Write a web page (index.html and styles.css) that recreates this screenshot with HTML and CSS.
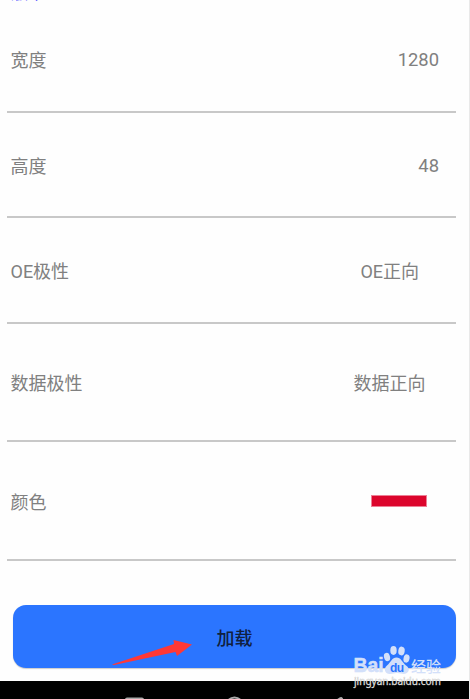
FILE: index.html
```html
<!DOCTYPE html>
<html lang="zh-CN">
<head>
<meta charset="utf-8">
<title>屏幕参数</title>
<link rel="stylesheet" href="styles.css">
</head>
<body>
<main class="screen">
  <div class="section-title">版本</div>
  <section class="rows">
    <div class="row"><span>宽度</span><span class="value value-number">1280</span></div>
    <div class="row"><span>高度</span><span class="value value-number">48</span></div>
    <div class="row"><span>OE极性</span><span class="value value-oe">OE正向</span></div>
    <div class="row row-tall"><span>数据极性</span><span class="value value-data">数据正向</span></div>
    <div class="row row-tall"><span>颜色</span><span class="swatch"></span></div>
  </section>
  <button class="load">加载</button>
  <nav class="navbar">
    <svg viewBox="0 0 469 18" width="469" height="18" fill="none" stroke="#aaa" stroke-width="2">
      <rect x="126" y="17.500" width="17" height="18" rx="1"/>
      <circle cx="234.500" cy="25" r="8.500"/>
      <path d="M341 18L330 25" stroke-width="4" stroke-linecap="round"/>
    </svg>
  </nav>
  <svg class="arrow" viewBox="0 0 80 26" width="80" height="26"><path d="M0 24.500L62 4L61.500 0L80 4.500L65 16L63.500 12L2 25Z" fill="#ff3836"/></svg>
  <svg class="watermark" viewBox="0 0 100 46" width="100" height="46">
    <g fill="#d3e0fa">
      <text class="brand" x="0.500" y="28" textLength="30" lengthAdjust="spacingAndGlyphs">Bai</text>
      <ellipse cx="34" cy="13" rx="3" ry="4.200" transform="rotate(-15 34 13)"/>
      <ellipse cx="40.500" cy="6.500" rx="3.200" ry="4.400"/>
      <ellipse cx="48.500" cy="7" rx="3.200" ry="4.400" transform="rotate(8 48.500 7)"/>
      <ellipse cx="53.500" cy="14.500" rx="3" ry="4.200" transform="rotate(12 53.500 14.500)"/>
      <path d="M43.500 13.500C39 13.500 38 18 34 21.500C30 25 32 30 37 30C40 30 41 29 44 29C47 29 49 30 51 30C57 29 57 24 53 21.500C49 18 48 13.500 43.500 13.500Z"/>
    </g>
    <text class="du" x="37" y="28" textLength="14">du</text>
    <text class="cn" x="58" y="27.500" textLength="30">经验</text>
    <text class="url" x="1" y="41" textLength="87" lengthAdjust="spacingAndGlyphs">jingyan.baidu.com</text>
  </svg>
</main>
</body>
</html>
```
FILE: styles.css
```css
* { box-sizing: border-box; }
body {
  margin: 0;
  background: #fff;
  font-family: Roboto, "Noto Sans CJK SC", sans-serif;
  font-size: 18px;
  color: #808080;
}
.screen {
  position: relative;
  width: 470px;
  height: 699px;
  overflow: hidden;
  border-right: 1px solid #e9e9e9;
  background: #fefefe;
  display: flex;
  flex-direction: column;
}
.section-title {
  flex: none;
  height: 24px;
  margin-top: -20px;
  padding-left: 11px;
  line-height: 24px;
  font-family: "Noto Sans CJK SC", sans-serif;
  font-size: 17px;
  color: #3434ff;
}
.rows { padding: 0 13px 0 7px; margin-top: 3px; }
.row {
  height: 105.500px;
  display: flex;
  align-items: center;
  justify-content: space-between;
  padding: 1px 17px 0 3.500px;
  border-bottom: 2px solid #c8c8c8;
}
.row-tall { height: 118.500px; }
.value-number { font-size: 18.400px; padding-top: 1px; }
.value-oe { margin-right: 20px; }
.value-data { margin-right: 13.500px; }
.swatch {
  width: 56px;
  height: 12px;
  margin-right: 12px;
  margin-top: 1px;
  background: #dc052c;
  border: 1px solid #ed7f95;
}
.load {
  height: 63px;
  margin: 44px 13px 0 13px;
  flex: none;
  border: 0;
  border-radius: 13px;
  background: #2b75ff;
  color: #10203f;
  font: 500 18px Roboto, "Noto Sans CJK SC", sans-serif;
  padding: 1px 0 0;
  box-shadow: 0 1px 1px #ccc;
}
.navbar { height: 18px; margin-top: auto; background: #000; }
.navbar svg { display: block; }
.arrow { position: absolute; left: 112px; top: 640px; }
.watermark { position: absolute; left: 353px; top: 644px; }
.brand { font: 700 20px "Liberation Sans", sans-serif; stroke: #d3e0fa; stroke-width: 0.500px; }
.du { font: 700 12px "Liberation Sans", sans-serif; fill: #2b75ff; }
.cn { font: 500 15px "Noto Sans CJK SC", sans-serif; fill: #d3e0fa; }
.url { font: 10.500px "Noto Sans", sans-serif; fill: #e0e0e0; stroke: #b8b8b8; stroke-width: 0.300px; paint-order: stroke; }
```
